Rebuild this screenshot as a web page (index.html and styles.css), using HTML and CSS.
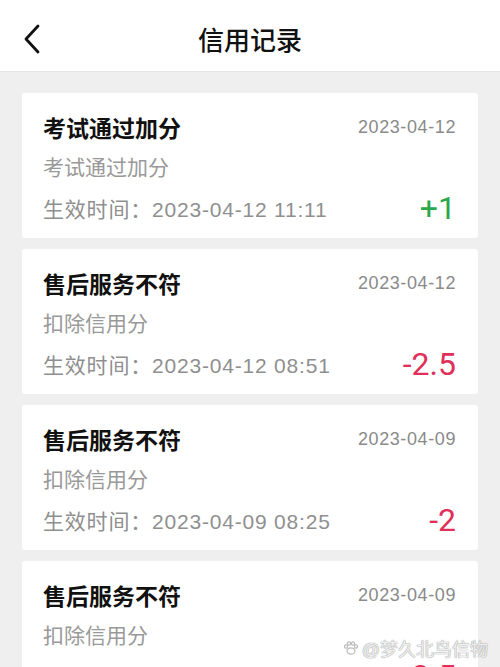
FILE: index.html
```html
<!DOCTYPE html>
<html lang="zh-CN">
<head>
    <meta charset="UTF-8">
    <meta name="viewport" content="width=device-width, initial-scale=1.0">
    <title>信用记录</title>
    <link rel="stylesheet" href="styles.css">
</head>
<body>
    <header class="nav-bar">
        <a class="back-button" href="#">
            <svg width="20" height="30" viewBox="0 0 20 30">
                <path d="M16 2 L4 15 L16 28" fill="none" stroke="#111" stroke-width="2.8" stroke-linecap="round" stroke-linejoin="round"/>
            </svg>
        </a>
        <h1>信用记录</h1>
    </header>

    <div class="record-list">
        <div class="record-card">
            <div class="record-head">
                <span class="record-title">考试通过加分</span>
                <span class="record-date">2023-04-12</span>
            </div>
            <div class="record-desc">考试通过加分</div>
            <div class="record-foot">
                <span class="record-time">生效时间：2023-04-12 11:11</span>
                <span class="record-score plus">+1</span>
            </div>
        </div>

        <div class="record-card">
            <div class="record-head">
                <span class="record-title">售后服务不符</span>
                <span class="record-date">2023-04-12</span>
            </div>
            <div class="record-desc">扣除信用分</div>
            <div class="record-foot">
                <span class="record-time">生效时间：2023-04-12 08:51</span>
                <span class="record-score minus">-2.5</span>
            </div>
        </div>

        <div class="record-card">
            <div class="record-head">
                <span class="record-title">售后服务不符</span>
                <span class="record-date">2023-04-09</span>
            </div>
            <div class="record-desc">扣除信用分</div>
            <div class="record-foot">
                <span class="record-time">生效时间：2023-04-09 08:25</span>
                <span class="record-score minus">-2</span>
            </div>
        </div>

        <div class="record-card">
            <div class="record-head">
                <span class="record-title">售后服务不符</span>
                <span class="record-date">2023-04-09</span>
            </div>
            <div class="record-desc">扣除信用分</div>
            <div class="record-foot">
                <span class="record-time">生效时间：2023-04-09 08:17</span>
                <span class="record-score minus">-2.5</span>
            </div>
        </div>
    </div>

    <div class="watermark">
        <svg width="16" height="16" viewBox="0 0 16 16">
            <g fill="none" stroke="#bbb" stroke-width="1.2">
                <ellipse cx="8" cy="11" rx="4" ry="3.2"/>
                <circle cx="3" cy="6.5" r="1.6"/>
                <circle cx="6" cy="3.5" r="1.6"/>
                <circle cx="10" cy="3.5" r="1.6"/>
                <circle cx="13" cy="6.5" r="1.6"/>
            </g>
        </svg>
        <span>@梦久北鸟信物</span>
    </div>
</body>
</html>
```

FILE: styles.css
```css
* {
    box-sizing: border-box;
}
html, body {
    height: 100%;
}
body {
    font-family: 'Liberation Sans', 'Noto Sans CJK SC', sans-serif;
    background-color: #efefef;
    margin: 0;
    overflow: hidden;
}
.nav-bar {
    height: 72px;
    background-color: #fff;
    border-bottom: 1px solid #e6e6e6;
    display: flex;
    align-items: center;
    justify-content: center;
    position: relative;
}
.nav-bar h1 {
    margin: 0;
    font-size: 26px;
    font-weight: 500;
    color: #111;
    padding-top: 6px;
}
.back-button {
    position: absolute;
    left: 22px;
    top: 24px;
    display: flex;
}
.record-list {
    padding: 21px 22px 0;
    display: flex;
    flex-direction: column;
    gap: 11px;
}
.record-card {
    background-color: #fff;
    border-radius: 3px;
    padding: 19px 22px 10px 21px;
}
.record-head, .record-foot {
    display: flex;
    justify-content: space-between;
    align-items: center;
}
.record-head {
    height: 30px;
    margin-bottom: 6px;
}
.record-title {
    font-size: 23px;
    font-weight: 600;
    color: #111;
}
.record-date {
    font-size: 18px;
    letter-spacing: 0.6px;
    color: #8a8a8a;
}
.record-desc {
    height: 40px;
    line-height: 40px;
    font-size: 21px;
    color: #999;
}
.record-foot {
    height: 40px;
}
.record-time {
    font-size: 21px;
    letter-spacing: 0.8px;
    color: #8f8f8f;
}
.record-score {
    font-family: Roboto, 'Liberation Sans', sans-serif;
    font-size: 32px;
    font-weight: 400;
}
.plus {
    color: #2ba84a;
}
.minus {
    color: #e0305a;
}
.watermark {
    position: absolute;
    right: 12px;
    bottom: 6px;
    display: flex;
    align-items: center;
    gap: 3px;
    font-size: 18px;
    color: rgba(255, 255, 255, 0.85);
    text-shadow: 0 0 1px #999, 0 0 1px #999;
}
```
